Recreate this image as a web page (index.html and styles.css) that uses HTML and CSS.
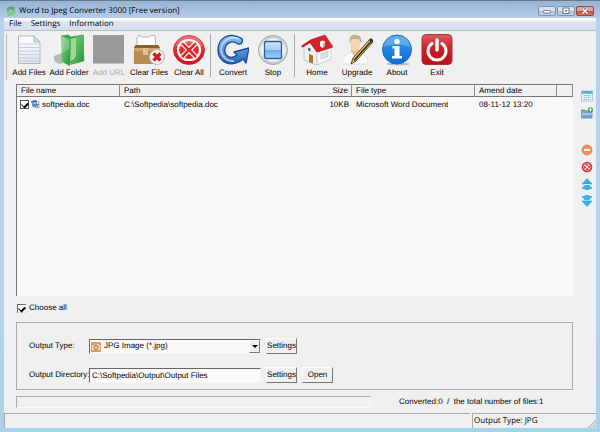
FILE: index.html
```html
<!DOCTYPE html>
<html lang="en">
<head>
  <meta charset="UTF-8" />
  <meta name="viewport" content="width=device-width, initial-scale=1" />
  <title>Word to Jpeg Converter 3000 [Free version]</title>
  <link rel="stylesheet" href="styles.css">
</head>
<body>
  <div class="window">

    <!-- Title bar -->
    <header class="titlebar">
      <svg class="app-icon" viewBox="0 0 12 12">
        <path d="M1 5.500C1 2.500 3.500 1 6 1L8 1.500L9.500 .5L10 5L6 4.500L7 3.500C5 3 3.500 4 3.200 5.500Z" fill="#55b85c" stroke="#2f8a40" stroke-width=".4"/>
        <path d="M11 6.500C11 9.500 8.500 11 6 11L4 10.500L2.500 11.500L2 7L6 7.500L5 8.500C7 9 8.500 8 8.800 6.500Z" fill="#8be08c" stroke="#2f8a40" stroke-width=".4"/>
      </svg>
      <h1 class="title">Word to Jpeg Converter 3000 [Free version]</h1>
      <button class="win-btn" aria-label="Minimize"><svg viewBox="0 0 16 8"><rect x="4.500" y="3.500" width="7" height="2.500" rx=".5" fill="#fff" stroke="#5c6b80" stroke-width=".8"/></svg></button>
      <button class="win-btn" aria-label="Maximize"><svg viewBox="0 0 16 8"><rect x="5" y="1" width="6" height="5.500" fill="#fff" stroke="#5c6b80" stroke-width=".9"/><rect x="7" y="3" width="2" height="1.500" fill="#5c6b80"/></svg></button>
      <button class="win-btn close" aria-label="Close"><svg viewBox="0 0 16 8"><path d="M5.500 1.500L10.500 6.500M10.500 1.500L5.500 6.500" stroke="#7a3a3a" stroke-width="2.800"/><path d="M5.500 1.500L10.500 6.500M10.500 1.500L5.500 6.500" stroke="#fff" stroke-width="1.700"/></svg></button>
    </header>

    <div class="client">
      <!-- Menu -->
      <nav class="menubar">
        <button class="menu-item">File</button>
        <button class="menu-item">Settings</button>
        <button class="menu-item">Information</button>
      </nav>

      <!-- Toolbar -->
      <div class="toolbar">
        <button class="tool">
          <svg viewBox="0 0 32 32">
            <defs><linearGradient id="paper" x1="0" y1="0" x2="0" y2="1"><stop offset="0" stop-color="#fff"/><stop offset="1" stop-color="#dfe5ef"/></linearGradient></defs>
            <path d="M5.500 2H21L27 8V29.500H5.500Z" fill="url(#paper)" stroke="#a9afba" stroke-width=".9"/>
            <path d="M21 2V8H27Z" fill="#d5dbe5" stroke="#9ea5b2" stroke-width=".7"/>
            <path d="M6 10H27M6 13.500H27M6 17H27M6 20.500H27M6 24H27M6 27H27" stroke="#bfcbe0" stroke-width=".9"/>
          </svg>
          <span>Add Files</span>
        </button>
        <button class="tool">
          <svg viewBox="0 0 32 32">
            <defs><linearGradient id="green" x1="0" y1="0" x2="1" y2="1"><stop offset="0" stop-color="#86d582"/><stop offset="1" stop-color="#259238"/></linearGradient></defs>
            <path d="M9 19L1 22C0 27 4 30 9 30Z" fill="#8b928c" opacity=".6"/>
            <path d="M8 2L15 1L18 3L30 1L31 27L18 30Z" fill="#35a447" stroke="#278637" stroke-width=".5"/>
            <path d="M17 5L25 3V22L17 28Z" fill="#9fd896"/>
            <path d="M8 2L18 5L17 32L9 28Z" fill="url(#green)"/>
            <path d="M23 3L31 1L30 27L17 31L23 22Z" fill="url(#green)"/>
            <path d="M9 3L16 6V15L9 19Z" fill="#fff" opacity=".22"/>
          </svg>
          <span>Add Folder</span>
        </button>
        <button class="tool" disabled>
          <svg viewBox="0 0 32 32"><rect x="0" y="1" width="31" height="28.500" fill="#9a9a9a"/></svg>
          <span>Add URL</span>
        </button>
        <button class="tool">
          <svg viewBox="0 0 32 32">
            <path d="M4 14L4 4L6 1L9 3L15 3L19 1L22 2L23 14Z" fill="#fcfcfc" stroke="#a5a5a5" stroke-width=".8"/>
            <path d="M2 11H25L27 14V30H1V14Z" fill="#b98b50"/>
            <path d="M1 14L3 11H25L27 14Z" fill="#89602f"/>
            <path d="M1 14H27V17H1Z" fill="#d2a66a"/>
            <rect x="10" y="14" width="5" height="7" fill="#e4c28d"/>
            <circle cx="24" cy="23" r="7.500" fill="#f5f5f5" stroke="#b7b7b7"/>
            <path d="M20.500 19.500L27.500 26.500M27.500 19.500L20.500 26.500" stroke="#d11c1f" stroke-width="3.200"/>
          </svg>
          <span>Clear Files</span>
        </button>
        <button class="tool">
          <svg viewBox="0 0 32 32">
            <defs><linearGradient id="red" x1="0" y1="0" x2="0" y2="1"><stop offset="0" stop-color="#f04a4a"/><stop offset="1" stop-color="#d80f18"/></linearGradient></defs>
            <ellipse cx="16" cy="16" rx="15.500" ry="14.500" fill="url(#red)" stroke="#c11b20" stroke-width=".7"/>
            <ellipse cx="16" cy="16" rx="11" ry="10" fill="none" stroke="#fff" stroke-width="2.200"/>
            <path d="M9 9L23 23M23 9L9 23" stroke="#fff" stroke-width="5"/>
            <path d="M9 9L23 23M23 9L9 23" stroke="#df2730" stroke-width="2.600"/>
            <path d="M2 13Q4 2 16 2T30 13Q16 6 2 13Z" fill="#fff" opacity=".22"/>
          </svg>
          <span>Clear All</span>
        </button>
        <div class="separator"></div>
        <button class="tool">
          <svg viewBox="0 0 32 32">
            <defs><linearGradient id="blue" x1="0" y1="0" x2="0" y2="1"><stop offset="0" stop-color="#8cc3f2"/><stop offset="1" stop-color="#2862b4"/></linearGradient></defs>
            <path d="M24 4C11-3 1 5 1 16C1 26 10 32 19 29C22 28 24 27 26 25L29 29L32 14L17 18L20 21C14 26 7 22 8 15C9 8 16 6 21 10C25 11 27 6 24 4Z" fill="url(#blue)" stroke="#184d9b" stroke-width="1.300" stroke-linejoin="round"/>
            <path d="M22 5C12 1 4 8 4 16C5 23 10 28 17 27" fill="none" stroke="#cfe8fd" stroke-width="1.800" opacity=".75"/>
          </svg>
          <span>Convert</span>
        </button>
        <button class="tool">
          <svg viewBox="0 0 32 32">
            <defs><linearGradient id="ring" x1="0" y1="0" x2="0" y2="1"><stop offset="0" stop-color="#c4c9cc"/><stop offset=".5" stop-color="#e6e8e8"/><stop offset="1" stop-color="#c5cacc"/></linearGradient>
            <linearGradient id="stop" x1="0" y1="0" x2="0" y2="1"><stop offset="0" stop-color="#d3e5f9"/><stop offset=".48" stop-color="#a9cdf3"/><stop offset=".5" stop-color="#6fa9e6"/><stop offset="1" stop-color="#9ed0fa"/></linearGradient></defs>
            <circle cx="16" cy="16" r="14.500" fill="url(#ring)" stroke="#9fa7aa"/>
            <circle cx="16" cy="16" r="11.500" fill="#f4f6f7"/>
            <rect x="7.500" y="7.500" width="17" height="17" rx="2" fill="url(#stop)" stroke="#2a5fa9" stroke-width="1.300"/>
          </svg>
          <span>Stop</span>
        </button>
        <div class="separator"></div>
        <button class="tool">
          <svg viewBox="0 0 32 32">
            <path d="M3 13L9 8L16 17V31L3 26Z" fill="#eef0f2" stroke="#b0b3b8" stroke-width=".6"/>
            <path d="M16 18L30 13V25L16 31Z" fill="#fafaf8" stroke="#b7b9bd" stroke-width=".6"/>
            <path d="M8 20L12 21.500V29.500L8 28Z" fill="#b56d2b"/>
            <path d="M7 13.500L9.500 14.500V17.500L7 16.500Z" fill="#59677b"/>
            <path d="M20 20L27 17.500V22.500L20 25Z" fill="#dfe3e8" stroke="#aaa" stroke-width=".5"/>
            <path d="M9 6L24 1L32 13L17 18Z" fill="#d9232b" stroke="#a91820" stroke-width=".6"/>
            <path d="M9 6L0 12L1.500 13.500L9 9L15.500 18L17 18Z" fill="#bd1820"/>
            <path d="M19 8L21 6.500L24 7.500V12L21.500 14L19 12Z" fill="#fff"/><path d="M22 9.500L24 8.500V12L22 13.500Z" fill="#b9aeae"/>
          </svg>
          <span>Home</span>
        </button>
        <button class="tool">
          <svg viewBox="0 0 32 32">
            <path d="M1 30C1 22 5 20 11 18H18C23 20 27 22 27 30Z" fill="#fbfbfa" stroke="#d8d8d5" stroke-width=".7"/>
            <path d="M10 18L14 23L18 18V14H10Z" fill="#e5c39b"/>
            <path d="M9 7C9 1 19 0 20 7L18 15Q14 19 10 15Z" fill="#f0d5b0"/>
            <path d="M9 9C7 2 12 0 15 1C20 1 21 5 20 9L18 5H11Z" fill="#c2b191"/>
            <path d="M29 5L12 24L10 30L15 27L32 8Z" fill="#edc44a" stroke="#42392a" stroke-width=".9"/>
            <path d="M30.500 7L13 26.500" stroke="#242424" stroke-width="1.500"/>
            <path d="M28 6L30 4L32.500 6.500L31 9Z" fill="#343434"/>
          </svg>
          <span>Upgrade</span>
        </button>
        <button class="tool">
          <svg viewBox="0 0 32 32">
            <defs><linearGradient id="info" x1="0" y1="0" x2="0" y2="1"><stop offset="0" stop-color="#3f9ae9"/><stop offset="1" stop-color="#0b6dd5"/></linearGradient></defs>
            <ellipse cx="17" cy="30" rx="12" ry="1.500" fill="#bbb"/>
            <circle cx="16" cy="15.500" r="14.500" fill="url(#info)" stroke="#1770c5"/>
            <path d="M2.500 13Q4 2 16 2T29.500 13Q15 8 2.500 13Z" fill="#fff" opacity=".22"/>
            <circle cx="16" cy="7.500" r="2.800" fill="#fff"/>
            <path d="M11.500 12H18.500V22H21V24.500H11V22H13.500V14.500H11.500Z" fill="#fff"/>
          </svg>
          <span>About</span>
        </button>
        <button class="tool">
          <svg viewBox="0 0 32 32">
            <defs><linearGradient id="exit" x1="0" y1="0" x2="0" y2="1"><stop offset="0" stop-color="#d66063"/><stop offset=".5" stop-color="#cd1b22"/><stop offset="1" stop-color="#b91119"/></linearGradient></defs>
            <rect x="1" y=".5" width="30" height="30" rx="4" fill="url(#exit)" stroke="#a9343a"/>
            <path d="M11 9.500A9 9 0 1 0 21 9.500" fill="none" stroke="#fff" stroke-width="3" stroke-linecap="round"/>
            <path d="M16 6V16" stroke="#fff" stroke-width="3.500" stroke-linecap="round"/>
          </svg>
          <span>Exit</span>
        </button>
      </div>

      <!-- File list and side buttons -->
      <div class="workspace">
        <main class="main">
          <div class="file-list">
            <table class="files">
              <colgroup>
                <col class="col-name"><col><col class="col-size"><col class="col-type"><col class="col-date"><col class="col-end">
              </colgroup>
              <thead>
                <tr><th>File name</th><th class="no-line">Path</th><th class="size">Size</th><th>File type</th><th>Amend date</th><th></th></tr>
              </thead>
              <tbody>
                <tr>
                  <td>
                    <div class="file-name">
                      <input class="check" type="checkbox" id="file1" checked>
                      <svg viewBox="0 0 10 10"><path d="M3 1L9 2V9L2 8Z" fill="#d6e5f6" stroke="#6f91bc" stroke-width=".6"/><path d="M4 5H9M4 7H8" stroke="#527ebc"/><path d="M0 1L6 0L7 6L2 7Z" fill="#3564b5"/><path d="M1.500 2.500L3 5L3.800 2.500L5 5L5.500 2" fill="none" stroke="#fff" stroke-width=".7"/></svg>
                      <label for="file1">softpedia.doc</label>
                    </div>
                  </td>
                  <td>C:\Softpedia\softpedia.doc</td>
                  <td class="size">10KB</td>
                  <td>Microsoft Word Document</td>
                  <td>08-11-12 13:20</td>
                  <td></td>
                </tr>
              </tbody>
            </table>
          </div>

          <div class="choose">
            <input class="check" type="checkbox" id="chooseAll" checked>
            <label for="chooseAll">Choose all</label>
          </div>

          <div class="output">
            <div class="row">
              <label class="row-label" for="outputType">Output Type:</label>
              <div class="select-box">
                <select class="field" id="outputType"><option>JPG Image (*.jpg)</option></select>
                <svg class="camera" viewBox="0 0 10 10"><rect width="10" height="10" rx="1" fill="#e59a4d"/><path d="M1 3H3L4 2H7L8 3H9V8H1Z" fill="#f6dec1"/><circle cx="5" cy="5.300" r="2.200" fill="#fff" stroke="#985e31"/><circle cx="5" cy="5.300" r=".8" fill="#626b88"/></svg>
                <span class="arrow"></span>
              </div>
              <button class="btn">Settings</button>
            </div>
            <div class="row">
              <label class="row-label" for="outputDir">Output Directory:</label>
              <input class="field" id="outputDir" type="text" value="C:\Softpedia\Output\Output Files">
              <button class="btn">Settings</button>
              <button class="btn">Open</button>
            </div>
          </div>

          <div class="progress-row">
            <div class="progress"></div>
            <div class="counter">Converted:0 &nbsp;/&nbsp; the total number of files:1</div>
          </div>
        </main>

        <aside class="side">
          <button class="side-btn" aria-label="Add files"><svg viewBox="0 0 12 12"><rect x=".5" y="1" width="11" height="10" fill="#eaf5fc" stroke="#8fb9d5" stroke-width=".7"/><rect x=".5" y="1" width="11" height="2.800" fill="#55afdf"/><path d="M2.500 5.500H9.500M2.500 7.500H9.500M2.500 9.500H9.500" stroke="#8ab7d4" stroke-dasharray="1.500 .7"/></svg></button>
          <button class="side-btn" aria-label="Add folder"><svg viewBox="0 0 12 12"><path d="M.5 3H4L5 4H11V11H.5Z" fill="#73a7d5" stroke="#5486b5" stroke-width=".7"/><path d="M1 6H11V8H1Z" fill="#a4c9e7"/><circle cx="9.500" cy="2.800" r="2.600" fill="#35a338"/><path d="M9.500 1V4.500M7.800 2.800H11.200" stroke="#fff"/></svg></button>
          <button class="side-btn remove" aria-label="Remove"><svg viewBox="0 0 12 12"><circle cx="6" cy="6" r="5" fill="#ed9158" stroke="#d9733b" stroke-width=".7"/><path d="M3 6H9" stroke="#fff" stroke-width="1.800"/></svg></button>
          <button class="side-btn" aria-label="Remove all"><svg viewBox="0 0 12 12"><circle cx="6" cy="6" r="5.300" fill="#d93034"/><circle cx="6" cy="6" r="3.500" fill="none" stroke="#f7b5b5" stroke-width=".8"/><path d="M3.500 4L8.500 8M8 3.500L4 8.500" stroke="#fff" stroke-width="1.100"/></svg></button>
          <button class="side-btn" aria-label="Move up"><svg viewBox="0 0 12 12"><path d="M6 .5L11 6H1ZM6 5L11 10.500H8V11.500H4V10.500H1Z" fill="#35b7e5" stroke="#279ac5" stroke-width=".6"/><path d="M3 6.500H9" stroke="#d7f2fc"/></svg></button>
          <button class="side-btn" aria-label="Move down"><svg viewBox="0 0 12 12"><path d="M6 11.500L11 6H1ZM6 7L11 1.500H8V.5H4V1.500H1Z" fill="#35b7e5" stroke="#279ac5" stroke-width=".6"/><path d="M3 5.500H9" stroke="#8edcf3"/></svg></button>
        </aside>
      </div>

      <!-- Status bar -->
      <footer class="statusbar">
        <div class="status-main"></div>
        <div class="status-type">Output Type: JPG
          <svg class="grip" viewBox="0 0 10 10"><path d="M1 10L10 1M4 10L10 4M7 10L10 7" stroke="#999"/></svg>
        </div>
      </footer>
    </div>
  </div>
</body>
</html>
```

FILE: styles.css
```css
* {
  box-sizing: border-box;
}

body {
  margin: 0;
  font-family: "Liberation Sans", Arial, sans-serif;
  font-size: 8px;
  line-height: 10px;
  text-rendering: geometricPrecision;
  color: #000;
}

button, input, select {
  font: inherit;
  color: inherit;
  text-rendering: inherit;
  margin: 0;
  padding: 0;
}

button {
  border: none;
  background: none;
}

svg {
  display: block;
  flex: none;
}

/* Window frame */
.window {
  display: flex;
  flex-direction: column;
  min-height: 100vh;
  padding: 0 4px 4px;
  background: linear-gradient(#98b3d3, #b8d1ec 20px, #b5d4ef 50%, #a9d3ea);
  border-top: 1px solid #66788c;
}

.titlebar {
  display: flex;
  align-items: center;
  height: 17px;
  padding: 2px 2px 0;
  gap: 1px;
}

.app-icon {
  width: 10px;
  height: 10px;
}

.title {
  flex: 1;
  margin: 0 0 0 2px;
  font-family: "Open Sans", sans-serif;
  font-size: 8px;
  font-weight: 400;
}

.win-btn {
  width: 18px;
  height: 10px;
  border: 1px solid #7f93ad;
  border-radius: 2px;
  background: linear-gradient(#d7e3f1 45%, #a7bdd8 50%, #c3d5e9);
}

.win-btn svg {
  width: 16px;
  height: 8px;
}

.close {
  border-color: #8c4b4b;
  background: linear-gradient(#dca79c 45%, #c0483b 50%, #d17c69);
}

.client {
  flex: 1;
  display: flex;
  flex-direction: column;
  background: #f0f0f0;
}

/* Menu */
.menubar {
  display: flex;
  gap: 9px;
  height: 13px;
  padding-left: 5px;
  border-bottom: 1px solid #b8bec9;
  background: linear-gradient(#fafcff 2px, #dce4f1 4px, #d6dfed);
  font-family: "Open Sans", sans-serif;
}

/* Toolbar */
.toolbar {
  display: flex;
  height: 53px;
  padding: 3px 0 0 2px;
}

.toolbar::before {
  content: "";
  width: 1px;
  height: 46px;
  margin-right: 2px;
  background: #bbb;
}

.tool {
  display: flex;
  flex-direction: column;
  align-items: center;
  width: 40px;
  gap: 2px;
  white-space: nowrap;
}

.tool svg {
  width: 32px;
  height: 32px;
}

.tool:disabled {
  color: #aaa;
}

.separator {
  width: 1px;
  height: 43px;
  margin: 0 2px 0 1px;
  background: #aaa;
}

/* File list */
.workspace {
  flex: 1;
  display: flex;
}

.main {
  flex: 1;
  display: flex;
  flex-direction: column;
  min-width: 0;
  padding-left: 12px;
}

.file-list {
  flex: 1;
  border-top: 1px solid #777;
  border-left: 1px solid #777;
  background: #f9f9f9;
}

.files {
  width: 100%;
  table-layout: fixed;
  border-collapse: separate;
  border-spacing: 0;
}

.col-name { width: 103px; }
.col-size { width: 48px; }
.col-type { width: 123px; }
.col-date { width: 82px; }
.col-end { width: 16px; }

.files th {
  height: 12px;
  padding: 0 4px;
  border-right: 1px solid #888;
  border-bottom: 1px solid #777;
  background: #f0f0f0;
  font-weight: 400;
  text-align: left;
}

.files th.no-line {
  border-right: none;
}

.files td {
  height: 15px;
  padding: 0 4px;
  white-space: nowrap;
}

.files td:first-child {
  padding-left: 3px;
}

.files .size {
  padding-right: 3px;
  text-align: right;
}

.file-name {
  display: flex;
  align-items: center;
  gap: 2px;
}

.file-name svg {
  width: 9px;
  height: 9px;
}

.check {
  appearance: none;
  width: 9px;
  height: 9px;
  border: 1px solid #555;
  background: #fff;
}

.check:checked::before {
  content: "";
  display: block;
  width: 5px;
  height: 3px;
  margin: 1px;
  border-left: 1px solid #000;
  border-bottom: 2px solid #000;
  transform: rotate(-45deg);
}

.choose {
  display: flex;
  align-items: center;
  gap: 3px;
  height: 26px;
  padding: 0 0 2px 1px;
}

.choose .check {
  border-color: #666 #ddd #ddd #666;
}

/* Output settings */
.output {
  display: flex;
  flex-direction: column;
  gap: 13px;
  padding: 15px 12px 6px;
  border: 1px solid #aaa;
}

.row {
  display: flex;
  align-items: center;
  gap: 5px;
}

.row-label {
  width: 55px;
  white-space: nowrap;
}

.field {
  width: 172px;
  height: 15px;
  padding: 0 2px;
  border: 1px solid;
  border-color: #666 #f5f5f5 #f5f5f5 #666;
  border-radius: 0;
  background: #fafafa;
}

.select-box {
  position: relative;
  display: flex;
}

.select-box .field {
  appearance: none;
  padding-left: 14px;
}

.camera {
  position: absolute;
  left: 2px;
  top: 3px;
  width: 10px;
  height: 10px;
  pointer-events: none;
}

.arrow {
  position: absolute;
  top: 1px;
  right: 1px;
  width: 11px;
  height: 13px;
  border: 1px solid;
  border-color: #fff #777 #777 #fff;
  background: #f0f0f0;
  pointer-events: none;
}

.arrow::before {
  content: "";
  position: absolute;
  left: 2px;
  top: 4px;
  border: 3px solid transparent;
  border-top-color: #000;
  border-bottom: none;
}

.btn {
  width: 31px;
  height: 16px;
  border: 1px solid;
  border-color: #fff #777 #777 #fff;
  background: #f0f0f0;
}

/* Progress */
.progress-row {
  display: flex;
  align-items: center;
  gap: 28px;
  height: 23px;
}

.progress {
  flex: 1;
  height: 12px;
  border: 1px solid;
  border-color: #aaa #f7f7f7 #f7f7f7 #aaa;
}

.counter {
  width: 174px;
  white-space: nowrap;
}

/* Side buttons */
.side {
  display: flex;
  flex-direction: column;
  align-items: center;
  gap: 5px;
  width: 23px;
  padding: 6px 0 0 4px;
}

.side-btn svg {
  width: 12px;
  height: 12px;
}

.remove {
  margin-top: 20px;
}

/* Status bar */
.statusbar {
  display: flex;
  gap: 2px;
  height: 15px;
}

.status-main {
  flex: 1;
}

.status-main,
.status-type {
  border-top: 1px solid #aaa;
  border-left: 1px solid #aaa;
}

.status-type {
  position: relative;
  width: 124px;
  padding: 2px 1px;
  font-family: "Open Sans", sans-serif;
}

.grip {
  position: absolute;
  right: 0;
  bottom: 0;
  width: 9px;
  height: 9px;
}
```
